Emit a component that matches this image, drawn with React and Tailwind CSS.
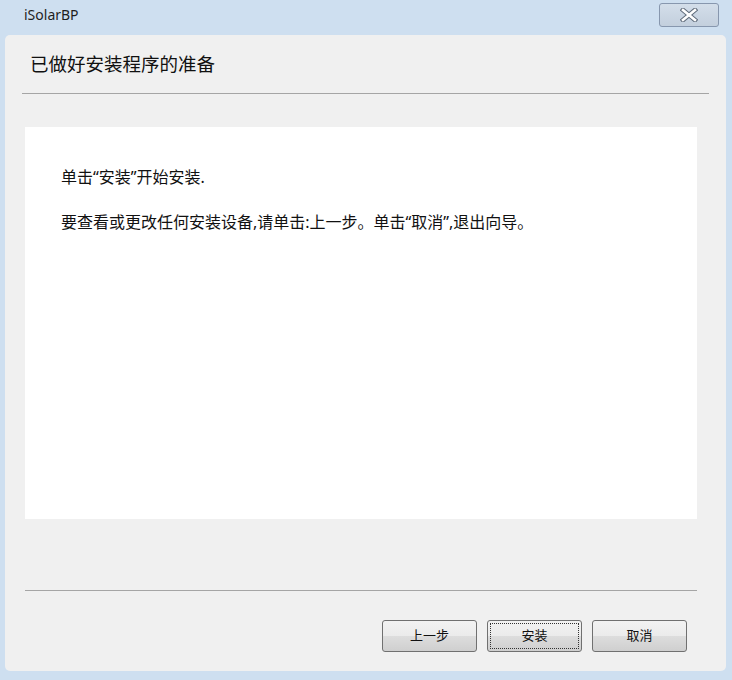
export default function App() {
  const cjk = { fontFamily: '"Noto Sans", "Noto Sans CJK SC", sans-serif' };
  const btn =
    'w-[95px] h-[32px] rounded-[3px] border border-[#707070] bg-[linear-gradient(#f2f2f2_0%,#ebebeb_50%,#dddddd_50%,#cfcfcf_100%)] text-[13px] text-[#111]';
  return (
    <div className="w-[732px] h-[680px] bg-[#cedff0] flex flex-col" style={cjk}>
      {/* Title bar */}
      <div className="h-[35px] flex items-start justify-between">
        <span className="ml-[24px] mt-[4px] text-[14px] text-[#1e1e1e]">iSolarBP</span>
        <div className="mt-[3px] mr-[13px] w-[60px] h-[24px] rounded-[3px] border border-[#8797ae] bg-[linear-gradient(#d3deea,#c3cfdd)] flex items-center justify-center">
          <svg width="18" height="14" viewBox="0 0 18 14">
            <path d="M3 2 L15 12 M15 2 L3 12" stroke="#5f6b7a" strokeWidth="4.6" strokeLinecap="square" />
            <path d="M3 2 L15 12 M15 2 L3 12" stroke="#ffffff" strokeWidth="2.6" strokeLinecap="square" />
          </svg>
        </div>
      </div>

      {/* Panel */}
      <div className="ml-[5px] mr-[6px] mb-[9px] flex-1 rounded-[5px] bg-[#f0f0f0] flex flex-col">
        <div className="pt-[17px] pl-[25px] h-[58px] text-[18.5px] text-[#111] leading-[24px]">已做好安装程序的准备</div>
        <div className="mx-[17px] h-px bg-[#a5a5a5]" />
        <div className="mt-[33px] ml-[20px] w-[672px] h-[392px] bg-white pl-[36px] pt-[39px] text-[16px] text-[#111] leading-[22px]">
          <p>单击“安装”开始安装.</p>
          <p className="mt-[23px]">要查看或更改任何安装设备,请单击:上一步。单击“取消”,退出向导。</p>
        </div>
        <div className="mt-[71px] ml-[20px] w-[672px] h-px bg-[#a5a5a5]" />
        <div className="mt-[29px] ml-[377px] flex gap-[10px]">
          <button className={btn}>上一步</button>
          <button className={`${btn} p-[2px] flex`}>
            <span className="flex-1 border border-dotted border-[#333] flex items-center justify-center">安装</span>
          </button>
          <button className={btn}>取消</button>
        </div>
      </div>
    </div>
  );
}
